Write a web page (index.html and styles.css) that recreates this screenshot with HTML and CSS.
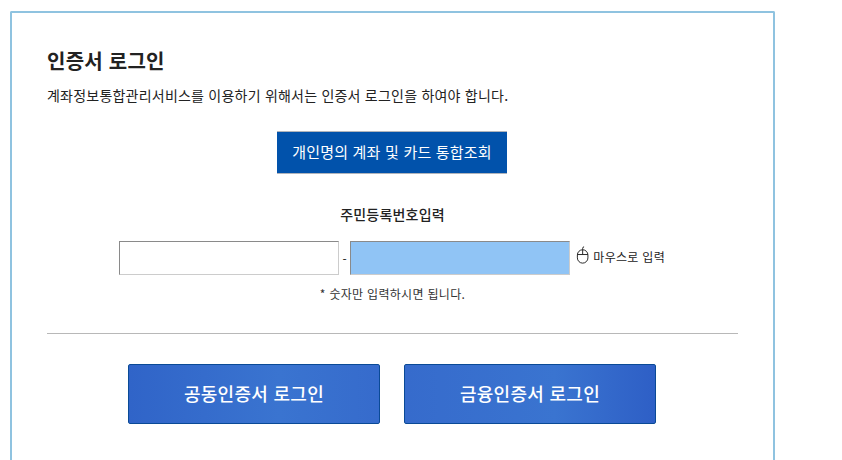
FILE: index.html
```html
<!DOCTYPE html>
<html lang="ko">
<head>
  <meta charset="UTF-8">
  <meta name="viewport" content="width=device-width, initial-scale=1.0">
  <title>인증서 로그인</title>
  <link rel="stylesheet" href="styles.css">
</head>
<body>
  <div class="card">
    <h1>인증서 로그인</h1>
    <p class="desc">계좌정보통합관리서비스를 이용하기 위해서는 인증서 로그인을 하여야 합니다.</p>

    <div class="center">
      <button class="btn-query">개인명의 계좌 및 카드 통합조회</button>
    </div>

    <div class="label">주민등록번호입력</div>

    <div class="id-row">
      <input class="id-input" type="text">
      <span class="dash">-</span>
      <input class="id-input active" type="text">
      <span class="mouse">
        <svg class="mouse-icon" width="16" height="20" viewBox="0 0 16 20" fill="none" stroke="#222" stroke-width="1">
          <rect x="2.5" y="4.5" width="11" height="14" rx="5.5"/>
          <path d="M2.5 9.5h11M8 4.5v5M8 4.5V3C8 2 8.5 1.5 9.5 1.5"/>
        </svg>
        마우스로 입력
      </span>
    </div>

    <p class="hint">* 숫자만 입력하시면 됩니다.</p>

    <hr class="line">

    <div class="login-btns">
      <button class="btn-login left">공동인증서 로그인</button>
      <button class="btn-login right">금융인증서 로그인</button>
    </div>
  </div>
</body>
</html>
```

FILE: styles.css
```css
body {
  margin: 0;
  padding: 11px 0 0 10px;
  background-color: #fff;
  color: #222;
  font-family: "Noto Sans CJK KR", "Noto Sans", sans-serif;
}
.card {
  width: 765px;
  height: 449px;
  box-sizing: border-box;
  border: 2px solid #8fc3e0;
  border-bottom: none;
  border-radius: 2px 2px 0 0;
  padding: 34px 35px 0;
}
h1 {
  margin: 0;
  font-size: 20px;
  line-height: 28px;
  font-weight: 700;
  letter-spacing: .25px;
}
.desc {
  margin: 10px 0 0;
  font-size: 14px;
  line-height: 20px;
  letter-spacing: .22px;
}
.center {
  display: flex;
  justify-content: center;
  margin-top: 26px;
  padding-right: 1px;
}
.btn-query {
  width: 230px;
  height: 43px;
  padding: 0 0 2px;
  border: none;
  border-top: 1px solid #b0b4bb;
  border-bottom: 1px solid #b0b4bb;
  background-color: #0152ab;
  color: #fff;
  font-family: inherit;
  font-size: 15px;
  letter-spacing: .2px;
}
.label {
  margin-top: 30px;
  text-align: center;
  font-size: 14px;
  font-weight: 500;
  line-height: 20px;
  letter-spacing: .2px;
}
.id-row {
  display: flex;
  justify-content: center;
  align-items: center;
  margin-top: 17px;
  padding-right: 1px;
}
.id-input {
  width: 220px;
  height: 34px;
  box-sizing: border-box;
  padding: 0;
  border: 1px solid;
  border-color: #8a8a8a #ccc #ccc #8a8a8a;
  background-color: #fff;
}
.id-input.active {
  background-color: #90c4f5;
}
.dash {
  width: 11px;
  text-align: center;
  font-size: 12px;
}
.mouse {
  display: flex;
  align-items: center;
  gap: 3px;
  width: 95px;
  padding: 0 0 4px 5px;
  box-sizing: border-box;
  font-size: 12px;
  letter-spacing: .3px;
  white-space: nowrap;
}
.mouse-icon {
  margin-bottom: 2px;
}
.hint {
  margin: 10px 0 0;
  text-align: center;
  font-size: 12px;
  line-height: 18px;
  color: #333;
  letter-spacing: .3px;
}
.line {
  margin: 30px 0 0;
  border: none;
  border-top: 1px solid #b8b8b8;
}
.login-btns {
  display: flex;
  justify-content: center;
  gap: 24px;
  margin-top: 30px;
  padding-right: 1px;
}
.btn-login {
  width: 252px;
  height: 60px;
  padding: 0 0 2px;
  border: 1px solid #0a4a96;
  border-radius: 2px;
  color: #fff;
  font-family: inherit;
  font-size: 18px;
  font-weight: 500;
  letter-spacing: .3px;
}
.btn-login.left {
  background: linear-gradient(90deg, #3064c8 0%, #3a74d0 60%, #366bcc 100%);
}
.btn-login.right {
  background: linear-gradient(90deg, #366bcc 0%, #3a74d0 60%, #2e5fc6 100%);
}
```
